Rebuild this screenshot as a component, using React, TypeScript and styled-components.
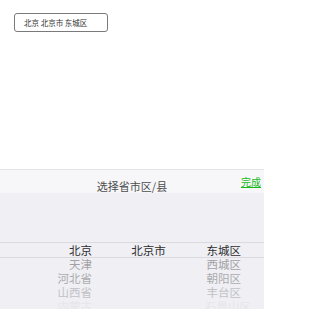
import React from "react";
import styled, { createGlobalStyle } from "styled-components";

const GlobalStyle = createGlobalStyle`
  html, body {
    margin: 0;
    padding: 0;
    background: #ffffff;
    font-family: "Noto Sans CJK SC", "Noto Sans", sans-serif;
  }
`;

const Page = styled.div`
  width: 264px;
  height: 309px;
  display: flex;
  flex-direction: column;
  overflow: hidden;
`;

const Content = styled.div`
  flex: 1;
  padding: 13px 0 0 14px;
`;

const AddressInput = styled.div`
  box-sizing: border-box;
  width: 94px;
  height: 19px;
  border: 1px solid #7a7a7a;
  border-radius: 3px;
  padding-left: 9px;
  font-size: 7.5px;
  line-height: 17px;
  color: #333333;
  white-space: pre;
`;

const Picker = styled.div`
  flex-shrink: 0;
  border-top: 1px solid #e4e4e8;
`;

const Header = styled.div`
  height: 23px;
  background: #f7f7f9;
  display: grid;
  grid-template-columns: 1fr auto 1fr;
`;

const Title = styled.div`
  grid-column: 2;
  align-self: end;
  font-size: 11px;
  line-height: 12px;
  color: #4d4d4d;
  padding-bottom: 1px;
`;

const Done = styled.a`
  grid-column: 3;
  justify-self: end;
  align-self: start;
  margin: 6px 3px 0 0;
  font-size: 10px;
  line-height: 12px;
  color: #19b919;
  text-decoration: underline;
`;

const Body = styled.div`
  height: 116px;
  background: #efeff4;
  display: grid;
  grid-template-columns: 92px 1fr 36px 23px;
  grid-template-rows: 50px 14px auto;
  overflow: hidden;
`;

const Indicator = styled.div`
  grid-column: 1 / -1;
  grid-row: 2;
  border-top: 1px solid #dadade;
  border-bottom: 1px solid #dadade;
  margin: -1px 0;
`;

const Column = styled.div<{ $align: "left" | "center" | "right"; $col: number }>`
  grid-column: ${(p) => p.$col};
  grid-row: 2 / 4;
  text-align: ${(p) => p.$align};
  white-space: nowrap;
`;

const Item = styled.div<{ $color: string }>`
  height: 14px;
  font-size: 11.5px;
  line-height: 14px;
  color: ${(p) => p.$color};
`;

const shades = ["#2e2e2e", "#a2a2a4", "#acacae", "#c2c2c6", "#e6e6ea"];

const columns: { align: "left" | "center" | "right"; items: string[] }[] = [
  { align: "right", items: ["北京", "天津", "河北省", "山西省", "内蒙古"] },
  { align: "center", items: ["北京市"] },
  { align: "right", items: ["东城区", "西城区", "朝阳区", "丰台区", "石景山区"] },
];

export default function App() {
  return (
    <Page>
      <GlobalStyle />
      <Content>
        <AddressInput>北京 北京市 东城区</AddressInput>
      </Content>
      <Picker>
        <Header>
          <Title>选择省市区/县</Title>
          <Done>完成</Done>
        </Header>
        <Body>
          <Indicator />
          {columns.map((col, i) => (
            <Column key={i} $align={col.align} $col={i + 1}>
              {col.items.map((it, j) => (
                <Item key={it} $color={shades[j]}>
                  {it}
                </Item>
              ))}
            </Column>
          ))}
        </Body>
      </Picker>
    </Page>
  );
}
